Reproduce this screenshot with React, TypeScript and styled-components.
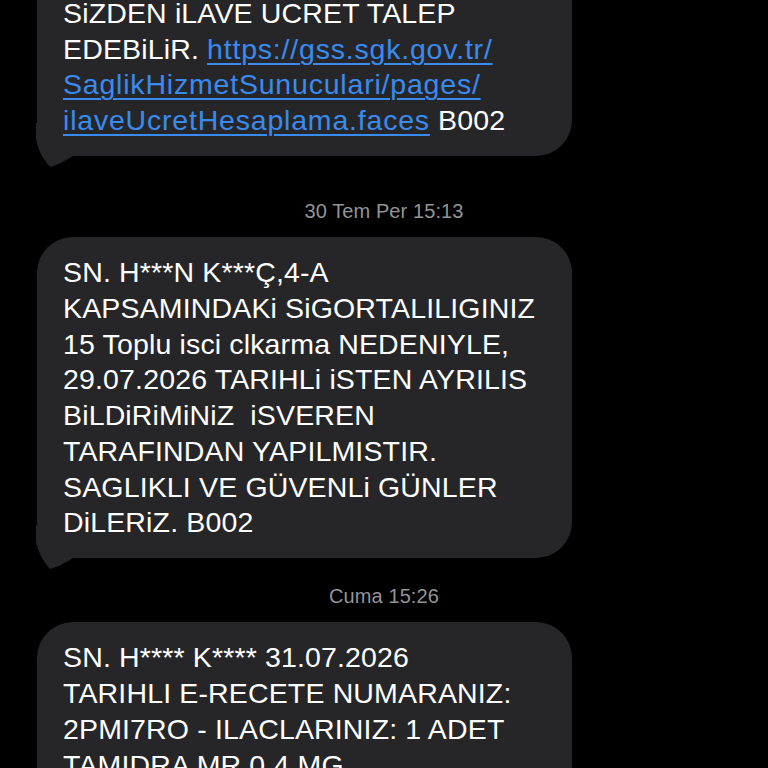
import React from "react";
import styled, { createGlobalStyle } from "styled-components";

const GlobalStyle = createGlobalStyle`
  html, body {
    margin: 0;
    padding: 0;
    background: #000000;
    overflow: hidden;
  }
  body {
    font-family: "Liberation Sans", Arial, sans-serif;
  }
`;

type Part = { text: string; link?: boolean };
type Message = { time?: string; gap?: number; cut?: boolean; lines: Part[][] };

const messages: Message[] = [
  {
    cut: true,
    lines: [
      [{ text: "SiZDEN iLAVE UCRET TALEP" }],
      [{ text: "EDEBiLiR. " }, { text: "https://gss.sgk.gov.tr/", link: true }],
      [{ text: "SaglikHizmetSunuculari/pages/", link: true }],
      [{ text: "ilaveUcretHesaplama.faces", link: true }, { text: " B002" }],
    ],
  },
  {
    time: "30 Tem Per 15:13",
    gap: 43,
    lines: [
      [{ text: "SN. H***N K***Ç,4-A" }],
      [{ text: "KAPSAMINDAKi SiGORTALILIGINIZ" }],
      [{ text: "15 Toplu isci clkarma NEDENIYLE," }],
      [{ text: "29.07.2026 TARIHLi iSTEN AYRILIS" }],
      [{ text: "BiLDiRiMiNiZ  iSVEREN" }],
      [{ text: "TARAFINDAN YAPILMISTIR." }],
      [{ text: "SAGLIKLI VE GÜVENLi GÜNLER" }],
      [{ text: "DiLERiZ. B002" }],
    ],
  },
  {
    time: "Cuma 15:26",
    gap: 26,
    lines: [
      [{ text: "SN. H**** K**** 31.07.2026" }],
      [{ text: "TARIHLI E-RECETE NUMARANIZ:" }],
      [{ text: "2PMI7RO - ILACLARINIZ: 1 ADET" }],
      [{ text: "TAMIDRA MR 0.4 MG" }],
      [{ text: "KAPSUL ALINMISTIR. B002" }],
    ],
  },
];

const Tail = () => (
  <TailSvg width="46" height="46" viewBox="0 0 46 46">
    <path d="M3 0 L3 16 C5 28 11 37 17 44 C25 42 33 37 42 32 L42 0 Z" fill="#262628" />
  </TailSvg>
);

export default function App() {
  return (
    <>
      <GlobalStyle />
      <Thread>
        {messages.map((m, i) => (
          <React.Fragment key={i}>
            {m.time && <Stamp $gap={m.gap ?? 30}>{m.time}</Stamp>}
            <Bubble $cut={!!m.cut}>
              <Tail />
              {m.lines.map((line, j) => (
                <Line key={j}>
                  {line.map((p, k) =>
                    p.link ? <Link key={k}>{p.text}</Link> : <span key={k}>{p.text}</span>
                  )}
                </Line>
              ))}
            </Bubble>
          </React.Fragment>
        ))}
      </Thread>
    </>
  );
}

const Thread = styled.div`
  display: flex;
  flex-direction: column;
  align-items: flex-start;
  width: 768px;
  margin-top: -58px;
`;

const Stamp = styled.div<{ $gap: number }>`
  align-self: stretch;
  text-align: center;
  margin-top: ${(p) => p.$gap}px;
  margin-bottom: 14px;
  color: #939398;
  font-size: 20px;
  line-height: 24px;
  letter-spacing: 0.1px;
`;

const Bubble = styled.div<{ $cut: boolean }>`
  position: relative;
  isolation: isolate;
  box-sizing: border-box;
  width: 535px;
  margin-left: 37px;
  padding: ${(p) => (p.$cut ? 54 : 18.5)}px 20px 17px 26px;
  background: #262628;
  border-radius: 36px;
  color: #ffffff;
  font-size: 28.5px;
  line-height: 35.7px;
  letter-spacing: 0.15px;
`;

const Line = styled.div`
  position: relative;
  z-index: 1;
  white-space: pre;
`;

const Link = styled.span`
  color: #3a8bef;
  letter-spacing: 0.8px;
  text-decoration: underline;
  text-decoration-thickness: 2px;
  text-underline-offset: 4px;
`;

const TailSvg = styled.svg`
  position: absolute;
  z-index: 0;
  left: -4px;
  bottom: -13px;
  display: block;
`;
